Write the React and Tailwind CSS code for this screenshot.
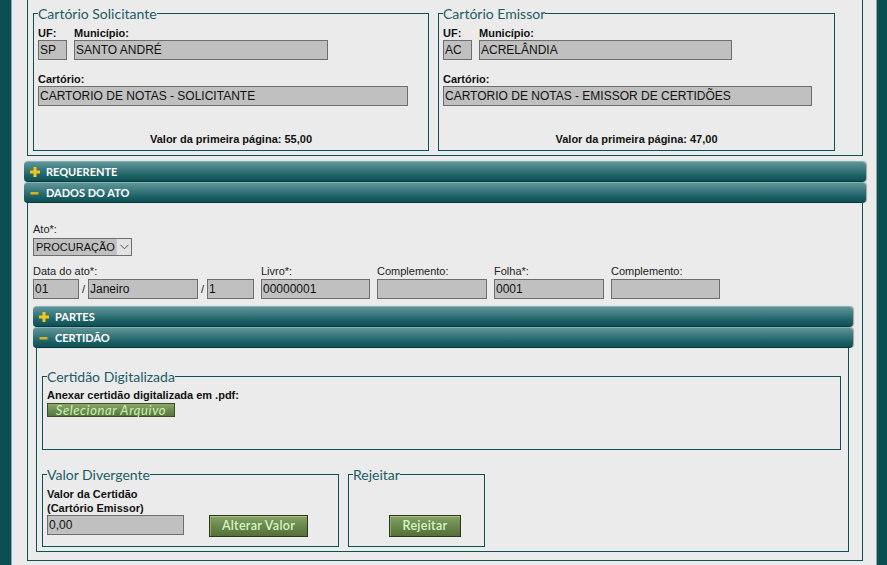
import React from "react";

function Plus() {
  return (
    <svg width="10" height="10" viewBox="0 0 10 10" className="shrink-0">
      <rect x="3.5" y="0" width="3" height="10" fill="#f3c61b" />
      <rect x="0" y="3.5" width="10" height="3" fill="#f3c61b" />
    </svg>
  );
}

function Minus() {
  return (
    <svg width="10" height="10" viewBox="0 0 10 10" className="shrink-0">
      <rect x="0.5" y="4" width="8" height="2.5" fill="#d9b21a" />
    </svg>
  );
}

function Bar({ minus, label, className }) {
  return (
    <div
      className={
        "h-[21px] flex items-center rounded-[4px] border-t border-t-[#86b3b5] border-b border-b-[#083a3d] bg-[linear-gradient(to_bottom,#5f9598_0%,#3f7c80_35%,#1d6267_70%,#0e5054_100%)] shadow-[1px_0_1px_rgba(0,0,0,0.3)] " +
        className
      }
    >
      <span className="ml-[6px] flex">{minus ? <Minus /> : <Plus />}</span>
      <span className="ml-[6px] text-white text-[11px] font-bold font-['Lato',sans-serif] leading-none">
        {label}
      </span>
    </div>
  );
}

function Legend({ children }) {
  return (
    <legend className="p-0 text-[14px] leading-[17px] text-[#1c5b66] font-['Lato',sans-serif]">
      {children}
    </legend>
  );
}

function Input({ value, className }) {
  return (
    <div
      className={
        "h-[20px] bg-[#c0c0c0] border border-[#6e6e6e] text-[12px] leading-[18px] text-[#111] pl-[1px] whitespace-nowrap overflow-hidden " +
        className
      }
    >
      {value}
    </div>
  );
}

function BoldLabel({ children, className }) {
  return (
    <div className={"text-[11px] leading-[13px] font-bold text-[#111] " + (className || "")}>
      {children}
    </div>
  );
}

function Label({ children, className }) {
  return (
    <div className={"text-[11px] leading-[13px] text-[#222] whitespace-nowrap " + (className || "")}>
      {children}
    </div>
  );
}

function GreenButton({ children, className }) {
  return (
    <div
      className={
        "flex items-center justify-center border border-[#2c3a12] shadow-[inset_0_1px_0_#a8c08a,inset_1px_0_0_#8fab70] bg-[linear-gradient(to_bottom,#86a267_0%,#6c8a4f_45%,#546f3a_100%)] text-[#d6f7c2] text-[12.5px] font-semibold font-['Lato',sans-serif] tracking-[0.3px] " +
        className
      }
    >
      {children}
    </div>
  );
}

function CartorioBox({ title, uf, mun, cart, valor, w, ufW, munW, cartW }) {
  return (
    <fieldset className={"m-0 mt-[5px] h-[146px] border border-[#0d5256] px-[4px] " + w}>
      <Legend>{title}</Legend>
      <div className="flex gap-[7px] mt-[5px]">
        <div className="flex flex-col">
          <BoldLabel>UF:</BoldLabel>
          <Input value={uf} className={ufW} />
        </div>
        <div className="flex flex-col">
          <BoldLabel>Município:</BoldLabel>
          <Input value={mun} className={munW} />
        </div>
      </div>
      <BoldLabel className="mt-[13px]">Cartório:</BoldLabel>
      <Input value={cart} className={cartW} />
      <div className="mt-[27px] text-center text-[11px] leading-[13px] font-bold text-[#111]">
        Valor da primeira página: {valor}
      </div>
    </fieldset>
  );
}

export default function App() {
  return (
    <div className="w-[887px] h-[565px] overflow-hidden flex bg-[#ebebeb] font-['Liberation_Sans',Arial,sans-serif]">
      <div className="w-[11px] shrink-0 bg-[#0c4f53]" />
      <div className="w-[1px] shrink-0 bg-[#8fa7a8]" />
      <div className="w-[864px] shrink-0 flex flex-col">
        {/* top cartorio panel */}
        <div className="shrink-0 ml-[15px] w-[836px] h-[156px] border-x border-b border-[#0d5256] flex gap-[9px] pl-[5px]">
          <CartorioBox
            title="Cartório Solicitante"
            uf="SP"
            mun="SANTO ANDRÉ"
            cart="CARTORIO DE NOTAS - SOLICITANTE"
            valor="55,00"
            w="w-[396px]"
            ufW="w-[29px]"
            munW="w-[254px]"
            cartW="w-[370px]"
          />
          <CartorioBox
            title="Cartório Emissor"
            uf="AC"
            mun="ACRELÂNDIA"
            cart="CARTORIO DE NOTAS - EMISSOR DE CERTIDÕES"
            valor="47,00"
            w="w-[397px]"
            ufW="w-[29px]"
            munW="w-[253px]"
            cartW="w-[369px]"
          />
        </div>

        {/* outer accordions */}
        <div className="shrink-0 ml-[12px] w-[842px] mt-[5px] flex flex-col">
          <Bar label="REQUERENTE" className="w-[842px]" />
          <Bar minus label="DADOS DO ATO" className="w-[842px]" />
        </div>

        {/* DADOS DO ATO panel */}
        <div className="shrink-0 ml-[15px] w-[836px] h-[358px] border-x border-b border-[#0d5256] pl-[5px] pt-[20px]">
          <Label>Ato*:</Label>
          <div className="mt-[2px] w-[99px] h-[18px] bg-[#c0c0c0] border border-[#6e6e6e] flex items-stretch">
            <div className="flex-1 text-[11px] leading-[16px] text-[#111] pl-[2px] whitespace-nowrap overflow-hidden">
              PROCURAÇÃO
            </div>
            <div className="w-[15px] shrink-0 bg-[#e2e2e2] border-l border-[#c8c8c8] flex items-center justify-center">
              <svg width="9" height="6" viewBox="0 0 9 6">
                <path d="M0.5 0.8 L4.5 4.8 L8.5 0.8" fill="none" stroke="#555" strokeWidth="1" />
              </svg>
            </div>
          </div>

          <div className="mt-[9px] flex gap-[7px]">
            <div className="flex flex-col">
              <Label>Data do ato*:</Label>
              <div className="mt-[1px] flex items-center">
                <Input value="01" className="w-[46px]" />
                <span className="w-[9px] text-center text-[11px] text-[#222]">/</span>
                <Input value="Janeiro" className="w-[110px]" />
                <span className="w-[9px] text-center text-[11px] text-[#222]">/</span>
                <Input value="1" className="w-[47px]" />
              </div>
            </div>
            <div className="flex flex-col">
              <Label>Livro*:</Label>
              <Input value="00000001" className="mt-[1px] w-[109px]" />
            </div>
            <div className="flex flex-col">
              <Label>Complemento:</Label>
              <Input value="" className="mt-[1px] w-[110px]" />
            </div>
            <div className="flex flex-col">
              <Label>Folha*:</Label>
              <Input value="0001" className="mt-[1px] w-[110px]" />
            </div>
            <div className="flex flex-col">
              <Label>Complemento:</Label>
              <Input value="" className="mt-[1px] w-[109px]" />
            </div>
          </div>

          {/* inner accordions */}
          <div className="mt-[7px] w-[820px] flex flex-col">
            <Bar label="PARTES" className="w-[820px]" />
            <Bar minus label="CERTIDÃO" className="w-[820px]" />
          </div>

          {/* CERTIDAO panel */}
          <div className="ml-[3px] w-[813px] h-[204px] border-x border-b border-[#0d5256] pl-[5px] pt-[20px]">
            <fieldset className="m-0 w-[799px] h-[82px] border border-[#0d5256] px-[4px]">
              <Legend>Certidão Digitalizada</Legend>
              <BoldLabel className="mt-[4px]">Anexar certidão digitalizada em .pdf:</BoldLabel>
              <div className="mt-[1px] w-[128px] h-[14px] flex items-center justify-center border border-[#3d5024] bg-[linear-gradient(to_bottom,#8aa86b_0%,#6f8d51_50%,#587440_100%)] text-[#c9f3b2] text-[13px] italic font-['Lato',sans-serif] tracking-[0.6px] leading-none">
                Selecionar Arquivo
              </div>
            </fieldset>

            <div className="mt-[16px] flex gap-[9px]">
              <fieldset className="m-0 w-[297px] h-[81px] border border-[#0d5256] px-[4px]">
                <Legend>Valor Divergente</Legend>
                <div className="mt-[4px] text-[11px] leading-[14px] font-bold text-[#111]">
                  Valor da Certidão
                  <br />
                  (Cartório Emissor)
                </div>
                <div className="flex items-start">
                  <Input value="0,00" className="w-[137px]" />
                  <GreenButton className="ml-[25px] w-[99px] h-[22px]">Alterar Valor</GreenButton>
                </div>
              </fieldset>
              <fieldset className="m-0 w-[137px] h-[81px] border border-[#0d5256] px-[4px]">
                <Legend>Rejeitar</Legend>
                <GreenButton className="mt-[32px] ml-[36px] w-[72px] h-[22px]">Rejeitar</GreenButton>
              </fieldset>
            </div>
          </div>
        </div>
      </div>
      <div className="w-[1px] shrink-0 bg-[#8fa7a8]" />
      <div className="w-[10px] shrink-0 bg-[#0c4f53]" />
    </div>
  );
}
